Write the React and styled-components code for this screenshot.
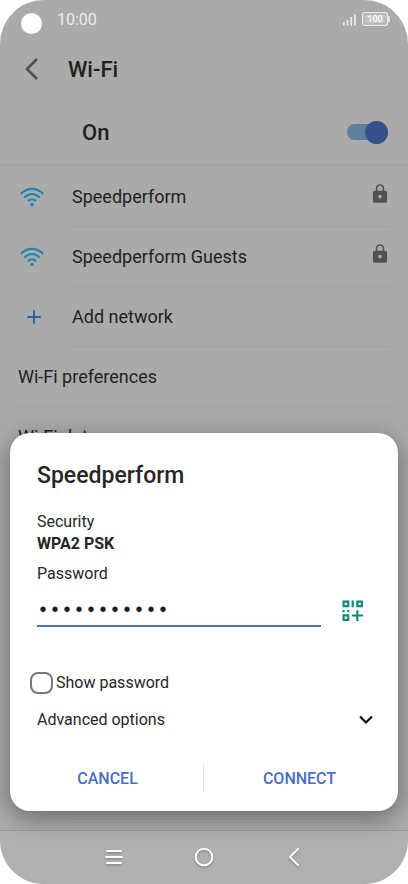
import React, { useState } from "react";
import styled, { createGlobalStyle } from "styled-components";

const GlobalStyle = createGlobalStyle`
  * {
    box-sizing: border-box;
  }
  body {
    margin: 0;
    background: #fff;
    color: #1f1f1f;
    font-family: Roboto, "Liberation Sans", sans-serif;
  }
  button {
    padding: 0;
    border: none;
    background: none;
    font-family: inherit;
    cursor: pointer;
  }
  h1, h2, p, ul {
    margin: 0;
    padding: 0;
  }
  svg {
    display: block;
  }
`;

const Phone = styled.div`
  position: relative;
  display: flex;
  flex-direction: column;
  min-height: 100vh;
  overflow: hidden;
  border-radius: 44px;
  background: #aaa;
`;

const StatusBar = styled.div`
  display: flex;
  align-items: center;
  height: 38px;
  padding: 0 18px 0 21px;
  color: #ededed;
  font-size: 16px;
`;

const Camera = styled.span`
  width: 21px;
  height: 21px;
  margin: 9px 15px 0 0;
  border-radius: 50%;
  background: #fff;
`;

const StatusIcons = styled.div`
  display: flex;
  gap: 6px;
  margin-left: auto;
`;

const Header = styled.header`
  display: flex;
  align-items: center;
  gap: 30px;
  height: 62px;
  padding: 0 24px;
`;

const PageTitle = styled.h1`
  padding-top: 2px;
  font-size: 22px;
  font-weight: 500;
  line-height: 28px;
`;

const ToggleRow = styled.label`
  display: flex;
  align-items: center;
  justify-content: space-between;
  height: 67px;
  padding: 0 20px 0 82px;
  border-bottom: 3px solid #a5a5a5;
  font-size: 22px;
  font-weight: 500;
`;

const Switch = styled.input`
  appearance: none;
  display: flex;
  align-items: center;
  justify-content: flex-end;
  width: 41px;
  height: 16px;
  margin: 0;
  border-radius: 8px;
  background: #5f7f9c;
  &::before {
    content: "";
    width: 23px;
    height: 23px;
    flex-shrink: 0;
    border-radius: 50%;
    background: #365189;
  }
`;

const List = styled.ul`
  display: flex;
  flex: 1;
  flex-direction: column;
  list-style: none;
`;

const Row = styled.li`
  display: flex;
  align-items: center;
  height: 60px;
  padding: 0 19px 0 18px;
`;

const RowIcon = styled.span`
  display: flex;
  width: 54px;
  padding-left: ${({ $inset }) => ($inset ? "9px" : "2px")};
`;

const RowBody = styled.div`
  display: flex;
  flex: 1;
  align-items: center;
  justify-content: space-between;
  height: 100%;
  border-bottom: 1px solid #a2a2a2;
  font-size: 18px;
`;

const LockBox = styled.span`
  padding: 0 2px 6px 0;
`;

const ListEnd = styled.li`
  flex: 1;
  margin: 0 19px 7px 72px;
  border-bottom: 1px solid #a2a2a2;
`;

const NavBar = styled.nav`
  display: flex;
  justify-content: center;
  gap: 50px;
  height: 54px;
  padding-bottom: 2px;
  border-top: 1px solid #999;
  background: #b0b0b0;
`;

const NavButton = styled.button`
  display: flex;
  align-items: center;
  justify-content: center;
  width: 40px;
  filter: drop-shadow(0 1px 1px rgba(0, 0, 0, 0.3));
`;

const Overlay = styled.div`
  position: absolute;
  inset: 0;
  display: flex;
  align-items: flex-end;
  padding: 0 10px 73px;
`;

const Dialog = styled.form`
  flex: 1;
  padding: 29px 25px 19px 27px;
  border-radius: 20px;
  background: #fff;
  box-shadow: 0 6px 24px rgba(0, 0, 0, 0.4);
  color: #262626;
  font-size: 16px;
  line-height: 22px;
`;

const DialogTitle = styled.h2`
  margin-bottom: 21px;
  font-size: 23px;
  font-weight: 500;
  line-height: 28px;
`;

const Security = styled.p`
  margin-bottom: 8px;
  strong {
    display: block;
    font-weight: 700;
  }
`;

const FieldLabel = styled.label`
  display: block;
`;

const FieldRow = styled.div`
  display: flex;
  align-items: flex-end;
  gap: 21px;
  margin-bottom: 45px;
  padding-right: 9px;
`;

const PasswordInput = styled.input`
  flex: 1;
  min-width: 0;
  height: 42px;
  padding: 10px 0 0;
  border: none;
  border-bottom: 2px solid #4a6dbb;
  outline: none;
  background: none;
  color: #1f1f1f;
  font-family: "Liberation Mono", monospace;
  font-size: 20px;
`;

const ScanButton = styled.button`
  padding-bottom: 5px;
`;

const CheckRow = styled.label`
  display: flex;
  align-items: center;
  gap: 3px;
  margin: 0 0 15px -7px;
`;

const CheckBox = styled.input`
  appearance: none;
  width: 23px;
  height: 22px;
  margin: 0;
  border: 2px solid #777;
  border-radius: 8px;
  &:checked {
    background: #4a6dbb;
  }
`;

const Advanced = styled.button`
  display: flex;
  align-items: center;
  justify-content: space-between;
  width: 100%;
  margin-bottom: 33px;
  color: #262626;
  font-size: 16px;
  line-height: 22px;
`;

const Actions = styled.div`
  display: flex;
  margin: 0 -22px 0 -25px;
`;

const Action = styled.button`
  flex: 1;
  height: 28px;
  color: #4a6fc0;
  font-size: 16px;
  font-weight: 500;
  & + & {
    border-left: 1px solid #e4e4e4;
  }
`;

const SignalIcon = () => (
  <svg width="13" height="14" viewBox="0 0 13 14" fill="#ededed">
    <rect x="0" y="10" width="1.7" height="3.5" />
    <rect x="3.7" y="7.8" width="1.7" height="5.7" />
    <rect x="7.4" y="5" width="1.7" height="8.5" />
    <rect x="11.1" y="2.2" width="1.7" height="11.3" />
  </svg>
);

const BatteryIcon = () => (
  <svg width="28" height="14" viewBox="0 0 28 14">
    <rect x="0.7" y="0.7" width="24.6" height="12.6" rx="2" fill="none" stroke="#ededed" strokeWidth="1.3" />
    <rect x="2.5" y="2.5" width="21" height="9" fill="#c4c4c4" />
    <rect x="26" y="4" width="1.8" height="6" rx="0.6" fill="#ededed" />
    <text x="13" y="10.2" textAnchor="middle" fontSize="9" fontWeight="500" fill="#fff">
      100
    </text>
  </svg>
);

const WifiIcon = () => (
  <svg width="24" height="20" viewBox="0 0 24 20" fill="none" stroke="#1c84b4" strokeWidth="2.2" strokeLinecap="round">
    <path d="M1.5 6.2C7.5 0.3 16.5 0.3 22.5 6.2" />
    <path d="M5 10C9 6 15 6 19 10" />
    <path d="M8.6 13.6C10.5 11.8 13.5 11.8 15.4 13.6" />
    <circle cx="12" cy="17.6" r="1.7" fill="#1c84b4" stroke="none" />
  </svg>
);

const PlusIcon = () => (
  <svg width="14" height="14" viewBox="0 0 14 14" stroke="#245f96" strokeWidth="1.8">
    <path d="M7 0.3V13.7M0.3 7H13.7" />
  </svg>
);

const LockIcon = () => (
  <svg width="14" height="19" viewBox="0 0 14 19">
    <path d="M3.6 7.5V4.3a3.4 3.4 0 0 1 6.8 0V7.5" fill="none" stroke="#505050" strokeWidth="1.5" />
    <path
      fillRule="evenodd"
      d="M1.5 6.8h11A1.5 1.5 0 0 1 14 8.3v8.9a1.5 1.5 0 0 1-1.5 1.5h-11A1.5 1.5 0 0 1 0 17.2V8.3a1.5 1.5 0 0 1 1.5-1.5ZM7 10.8a1.8 1.8 0 1 0 0 3.6a1.8 1.8 0 0 0 0-3.6Z"
      fill="#505050"
    />
  </svg>
);

const BackIcon = () => (
  <svg width="14" height="22" viewBox="0 0 14 22" fill="none" stroke="#505050" strokeWidth="2.6">
    <path d="M13 1L3 11L13 21" />
  </svg>
);

const QrIcon = () => (
  <svg width="22" height="22" viewBox="0 0 22 22" fill="none" stroke="#0a8a78" strokeWidth="2.2">
    <path d="M1.6 1.6h4.6v4.6h-4.6zM15.3 1.6h4.6v4.6h-4.6zM1.6 15.3h4.6v4.6h-4.6z" />
    <path d="M10.7 0.5V7.3M0.5 11.2H2.6M5.2 11.2H7.3M15.3 10.2V21M9.8 15.5H21" />
  </svg>
);

const ChevronIcon = () => (
  <svg width="14" height="10" viewBox="0 0 14 10" fill="none" stroke="#111" strokeWidth="2.2">
    <path d="M1 1.5L7 7.5L13 1.5" />
  </svg>
);

const networks = ["Speedperform", "Speedperform Guests"];

const App = () => {
  const [password, setPassword] = useState("hidden12345");
  const [visible, setVisible] = useState(false);

  return (
    <>
      <GlobalStyle />
      <Phone>
        <StatusBar>
          <Camera />
          <span>10:00</span>
          <StatusIcons>
            <SignalIcon />
            <BatteryIcon />
          </StatusIcons>
        </StatusBar>
        <Header>
          <button type="button" aria-label="Back">
            <BackIcon />
          </button>
          <PageTitle>Wi-Fi</PageTitle>
        </Header>
        <ToggleRow>
          On
          <Switch type="checkbox" role="switch" defaultChecked />
        </ToggleRow>
        <List>
          {networks.map((name) => (
            <Row key={name}>
              <RowIcon>
                <WifiIcon />
              </RowIcon>
              <RowBody>
                {name}
                <LockBox>
                  <LockIcon />
                </LockBox>
              </RowBody>
            </Row>
          ))}
          <Row>
            <RowIcon $inset>
              <PlusIcon />
            </RowIcon>
            <RowBody>Add network</RowBody>
          </Row>
          <Row>
            <RowBody>Wi-Fi preferences</RowBody>
          </Row>
          <Row>
            <RowBody>Wi-Fi data usage</RowBody>
          </Row>
          <ListEnd />
        </List>
        <NavBar>
          <NavButton type="button" aria-label="Recent apps">
            <svg width="18" height="16" viewBox="0 0 18 16" stroke="#fff" strokeWidth="2" strokeLinecap="round">
              <path d="M2 2H16M1 8H17M2 14H16" />
            </svg>
          </NavButton>
          <NavButton type="button" aria-label="Home">
            <svg width="20" height="20" viewBox="0 0 20 20" fill="none" stroke="#fff" strokeWidth="2">
              <circle cx="10" cy="10" r="8.3" />
            </svg>
          </NavButton>
          <NavButton type="button" aria-label="Back">
            <svg width="12" height="20" viewBox="0 0 12 20" fill="none" stroke="#fff" strokeWidth="2" strokeLinecap="round">
              <path d="M10 2L2 10L10 18" />
            </svg>
          </NavButton>
        </NavBar>
        <Overlay>
          <Dialog onSubmit={(e) => e.preventDefault()}>
            <DialogTitle>Speedperform</DialogTitle>
            <Security>
              Security
              <strong>WPA2 PSK</strong>
            </Security>
            <FieldLabel htmlFor="password">Password</FieldLabel>
            <FieldRow>
              <PasswordInput
                id="password"
                type={visible ? "text" : "password"}
                value={password}
                onChange={(e) => setPassword(e.target.value)}
              />
              <ScanButton type="button" aria-label="Scan QR code">
                <QrIcon />
              </ScanButton>
            </FieldRow>
            <CheckRow>
              <CheckBox type="checkbox" checked={visible} onChange={(e) => setVisible(e.target.checked)} />
              Show password
            </CheckRow>
            <Advanced type="button">
              Advanced options
              <ChevronIcon />
            </Advanced>
            <Actions>
              <Action type="button">CANCEL</Action>
              <Action type="submit">CONNECT</Action>
            </Actions>
          </Dialog>
        </Overlay>
      </Phone>
    </>
  );
};

export default App;
